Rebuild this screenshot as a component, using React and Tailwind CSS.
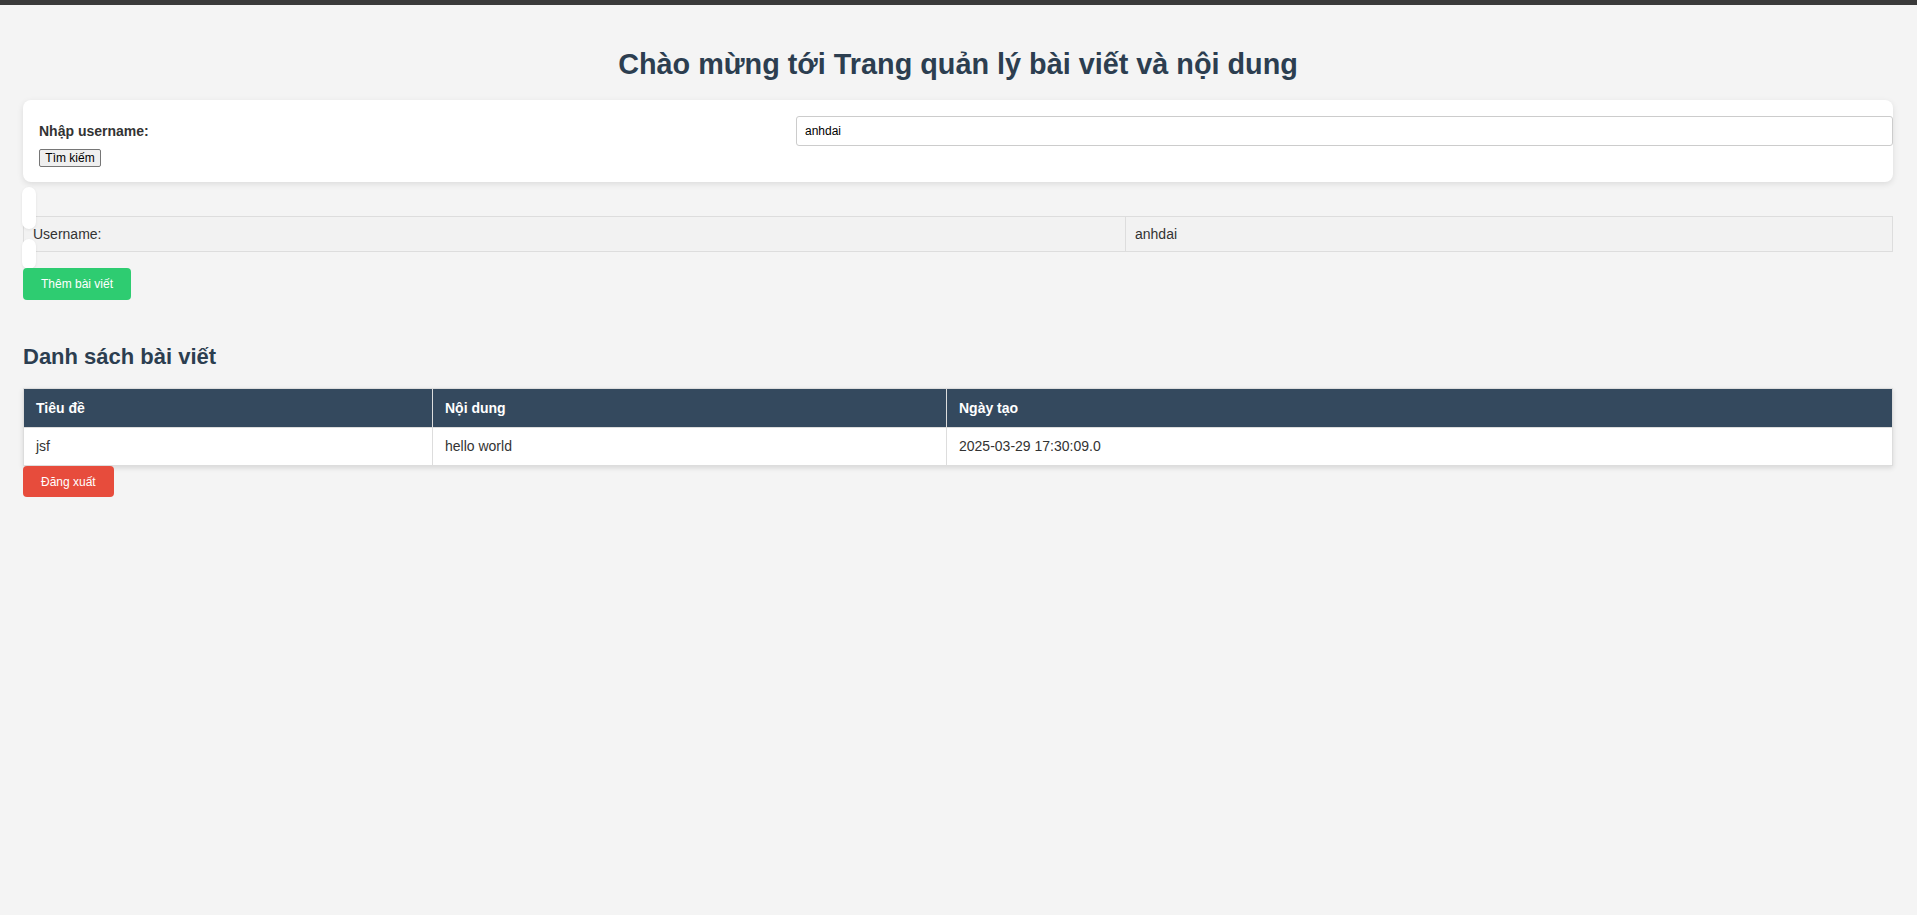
import { useState } from 'react';

const posts = [
  { title: 'jsf', content: 'hello world', createdAt: '2025-03-29 17:30:09.0' },
];

const App = () => {
  const [username, setUsername] = useState('anhdai');

  return (
    <div className="min-h-screen bg-[#f4f4f4] font-['Liberation_Sans',Arial,sans-serif] text-[#333]">
      <div className="h-[5px] bg-[#3a3a3a]"></div>

      <div className="pl-[23px] pr-[24px] pb-10">
        {/* Header */}
        <h1 className="mt-[43px] mb-[19px] text-center text-[28.8px] font-bold leading-[33px] text-[#2c3e50]">
          Chào mừng tới Trang quản lý bài viết và nội dung
        </h1>

        {/* Search form */}
        <div className="rounded-lg bg-white px-4 pt-4 pb-[15px] shadow-[0_2px_6px_rgba(0,0,0,0.1)]">
          <div className="grid grid-cols-[757px_1fr] items-center">
            <label className="text-[14px] font-bold text-[#333]">Nhập username:</label>
            <input
              value={username}
              onChange={(e) => setUsername(e.target.value)}
              className="h-[30px] w-[calc(100%+16px)] max-w-none rounded-[3px] border border-[#ccc] bg-white px-2 text-[12px] text-black outline-none"
            />
          </div>
          <button className="mt-[3px] flex h-[18px] w-[62px] items-center justify-center rounded-[2px] border border-[#767676] bg-[#efefef] text-[12px] leading-none text-black">
            Tìm kiếm
          </button>
        </div>

        {/* User info */}
        <div className="relative pt-[34px]">
          <div className="absolute left-[-1px] top-[5px] h-[42px] w-[14px] rounded-lg bg-white shadow-[0_1px_3px_rgba(0,0,0,0.08)]"></div>
          <div className="absolute left-[-1px] top-[57px] h-[30px] w-[14px] rounded-lg bg-white shadow-[0_1px_3px_rgba(0,0,0,0.08)]"></div>

          <table className="w-full table-fixed border-collapse text-[14px]">
            <tbody>
              <tr className="bg-[#f2f2f2]">
                <td className="h-[35px] w-[1102px] border border-[#ddd] px-[9px]">Username:</td>
                <td className="h-[35px] border border-[#ddd] px-[9px]">{username}</td>
              </tr>
            </tbody>
          </table>

          <button className="relative mt-[16px] h-[32px] rounded-[4px] bg-[#2ecc71] px-[18px] text-[12px] text-white">
            Thêm bài viết
          </button>
        </div>

        {/* Posts */}
        <h2 className="mt-[44px] mb-[19px] text-[22px] font-bold leading-[25px] text-[#2c3e50]">
          Danh sách bài viết
        </h2>

        <table className="w-full table-fixed border-collapse text-[14px] shadow-[0_2px_5px_rgba(0,0,0,0.12)]">
          <thead>
            <tr className="bg-[#34495e] text-white">
              <th className="h-[39px] w-[409px] border border-[#ddd] px-3 text-left font-bold">Tiêu đề</th>
              <th className="h-[39px] w-[514px] border border-[#ddd] px-3 text-left font-bold">Nội dung</th>
              <th className="h-[39px] border border-[#ddd] px-3 text-left font-bold">Ngày tạo</th>
            </tr>
          </thead>
          <tbody>
            {posts.map((post, index) => (
              <tr key={index} className="bg-white">
                <td className="h-[38px] border border-[#ddd] px-3">{post.title}</td>
                <td className="h-[38px] border border-[#ddd] px-3">{post.content}</td>
                <td className="h-[38px] border border-[#ddd] px-3">{post.createdAt}</td>
              </tr>
            ))}
          </tbody>
        </table>

        <button className="h-[31px] rounded-[4px] bg-[#e74c3c] px-[18px] text-[12px] text-white">
          Đăng xuất
        </button>
      </div>
    </div>
  );
};

export default App;
